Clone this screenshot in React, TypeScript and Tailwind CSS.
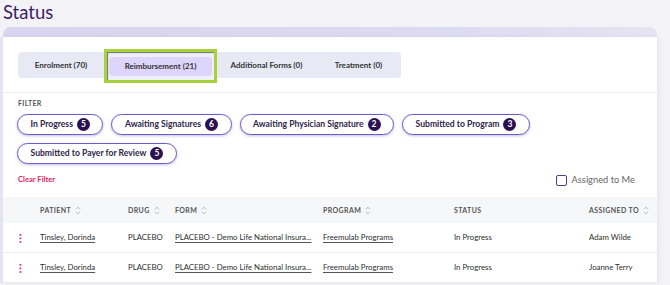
import React from "react";

const chipsRow1 = [
  { label: "In Progress", n: 5 },
  { label: "Awaiting Signatures", n: 6 },
  { label: "Awaiting Physician Signature", n: 2 },
  { label: "Submitted to Program", n: 3 },
];

function Chip({ label, n }: { label: string; n: number }) {
  return (
    <div className="flex h-[21px] items-center gap-[4px] rounded-full border-[1.5px] border-[#6c5bd0] bg-white px-[12.5px] shadow-[0_1px_3px_rgba(90,70,170,0.35)]">
      <span className="text-[8.6px] font-bold leading-none text-[#2f2548]">{label}</span>
      <span className="flex h-[13px] w-[13px] items-center justify-center rounded-full bg-[#2a1152] text-[8.5px] font-bold leading-none text-white">
        {n}
      </span>
    </div>
  );
}

function Sort() {
  return (
    <svg width="6" height="9" viewBox="0 0 6 9" className="ml-[4px]">
      <path d="M1 3.2 L3 1.2 L5 3.2" fill="none" stroke="#aab" strokeWidth="0.9" />
      <path d="M1 5.8 L3 7.8 L5 5.8" fill="none" stroke="#aab" strokeWidth="0.9" />
    </svg>
  );
}

function Kebab() {
  return (
    <svg width="3" height="9" viewBox="0 0 3 9">
      <rect x="0.5" y="0" width="1.8" height="1.6" fill="#e0245e" />
      <rect x="0.5" y="3.6" width="1.8" height="1.6" fill="#e0245e" />
      <rect x="0.5" y="7.2" width="1.8" height="1.6" fill="#e0245e" />
    </svg>
  );
}

const cols = "grid grid-cols-[37px_88px_47px_148px_131px_135px_68px]";

function Row({ assigned }: { assigned: string }) {
  return (
    <div className={`${cols} h-[30px] items-center border-b border-[#ebebf0] pt-[1px] text-[7.8px] text-[#2e2e2e]`}>
      <div className="flex justify-center">
        <div className="mr-[2px]">
          <Kebab />
        </div>
      </div>
      <div className="underline decoration-[#555] underline-offset-[1.5px]">Tinsley, Dorinda</div>
      <div>PLACEBO</div>
      <div className="whitespace-nowrap underline decoration-[#555] underline-offset-[1.5px]">
        PLACEBO - Demo Life National Insura...
      </div>
      <div className="underline decoration-[#555] underline-offset-[1.5px]">Freemulab Programs</div>
      <div>In Progress</div>
      <div className="whitespace-nowrap">{assigned}</div>
    </div>
  );
}

export default function App() {
  return (
    <div
      className="h-[285px] w-[670px] overflow-hidden bg-[#f3f3f7]"
      style={{ fontFamily: "Lato, 'Noto Sans', sans-serif" }}
    >
      <div className="h-[27px] pl-[3px] text-[18.5px] leading-[24px] text-[#3c1f66]">Status</div>
      <div className="ml-[3px] w-[654px]">
        <div className="h-[10px] rounded-t-[8px] bg-[linear-gradient(90deg,#d9d4ef,#dcd9f1_60%,#e4e4f3)]" />
        <div className="bg-white shadow-[-3px_0_0_#e6e4f2,2px_0_4px_rgba(0,0,0,0.05)]">
          {/* Tabs */}
          <div className="border-b border-[#ececf3] px-[15px] pb-[14px] pt-[15px]">
            <div className="flex h-[26px] w-[383px] items-center rounded-[4px] bg-[#e7eaf5] text-[8px] font-bold text-[#333]">
              <div className="w-[86px] text-center">Enrolment (70)</div>
              <div className="relative top-[1px] flex h-[34px] w-[113px] items-center border-[3px] border-[#a8d13b] bg-[#eef0f8] p-[2px] shadow-[inset_1px_1px_1px_rgba(60,60,60,0.7)]">
                <div className="flex h-[19px] w-full items-center justify-center rounded-[4px] bg-[#ddd5fc]">
                  Reimbursement (21)
                </div>
              </div>
              <div className="w-[99px] text-center">Additional Forms (0)</div>
              <div className="w-[85px] text-center">Treatment (0)</div>
            </div>
          </div>
          {/* Filter */}
          <div className="px-[14px]">
            <div className="mt-[5px] h-[11px] pl-[1px] text-[7px] font-bold leading-[11px] tracking-[0.3px] text-[#555]">
              FILTER
            </div>
            <div className="mt-[5px] flex flex-wrap gap-x-[8px] gap-y-[8px]">
              {chipsRow1.map((c) => (
                <Chip key={c.label} label={c.label} n={c.n} />
              ))}
              <Chip label="Submitted to Payer for Review" n={5} />
            </div>
            <div className="mt-[9px] flex h-[14px] items-center justify-between pr-[8px]">
              <span className="pl-[1px] text-[7.6px] font-bold text-[#e0245e]">Clear Filter</span>
              <div className="flex items-center gap-[5px]">
                <div className="h-[11px] w-[11px] rounded-[2px] border-[1.5px] border-[#5a3a86]" />
                <span className="text-[9.3px] text-[#666]">Assigned to Me</span>
              </div>
            </div>
          </div>
          {/* Table */}
          <div className="mt-[10px]">
            <div className={`${cols} h-[26px] items-center bg-[#f6f7f9] text-[7px] font-bold tracking-[0.4px] text-[#555]`}>
              <div />
              <div className="flex items-center">
                PATIENT
                <Sort />
              </div>
              <div className="flex items-center">
                DRUG
                <Sort />
              </div>
              <div className="flex items-center">
                FORM
                <Sort />
              </div>
              <div className="flex items-center">
                PROGRAM
                <Sort />
              </div>
              <div className="flex items-center">STATUS</div>
              <div className="flex items-center whitespace-nowrap">
                ASSIGNED TO
                <Sort />
              </div>
            </div>
            <Row assigned="Adam Wilde" />
            <Row assigned="Joanne Terry" />
          </div>
        </div>
      </div>
    </div>
  );
}
